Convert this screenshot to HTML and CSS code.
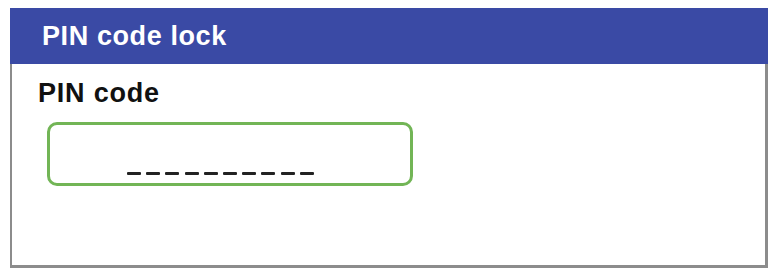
FILE: index.html
```html
<!DOCTYPE html>
<html>
<head>
<meta charset="utf-8">
<link rel="stylesheet" href="styles.css">
</head>
<body>
<div class="panel">
  <div class="title">PIN code lock</div>
  <div class="content">
    <div class="label">PIN code</div>
    <div class="pinbox">
      <div class="dashes">
        <span class="dash"></span><span class="dash"></span><span class="dash"></span><span class="dash"></span><span class="dash"></span><span class="dash"></span><span class="dash"></span><span class="dash"></span><span class="dash"></span><span class="dash"></span>
      </div>
    </div>
  </div>
</div>
</body>
</html>
```

FILE: styles.css
```css
html, body {
  margin: 0;
  padding: 0;
  background: #ffffff;
}
body {
  font-family: "Liberation Sans", Arial, sans-serif;
}
.panel {
  margin: 8px 0 0 10px;
  width: 758px;
}
.title {
  height: 56px;
  background: #3a4aa5;
  color: #ffffff;
  font-weight: bold;
  font-size: 27px;
  line-height: 56px;
  padding-left: 32px;
  letter-spacing: 0.6px;
}
.content {
  height: 189px;
  border-left: 2px solid #8c8c8c;
  border-right: 3px solid #8c8c8c;
  border-bottom: 3px solid #8c8c8c;
  background: #ffffff;
  padding-top: 12px;
}
.label {
  padding-left: 26px;
  font-size: 27px;
  font-weight: bold;
  color: #111111;
  line-height: 34px;
  letter-spacing: 0.8px;
}
.pinbox {
  margin: 12px 0 0 35px;
  width: 366px;
  height: 64px;
  box-sizing: border-box;
  border: 3px solid #72b556;
  border-radius: 10px;
  display: flex;
  align-items: flex-end;
  padding-left: 77px;
}
.dashes {
  display: flex;
  gap: 5.2px;
  margin-bottom: 8px;
}
.dash {
  display: block;
  width: 14px;
  height: 3px;
  background: #222222;
  border-radius: 1px;
}
```
